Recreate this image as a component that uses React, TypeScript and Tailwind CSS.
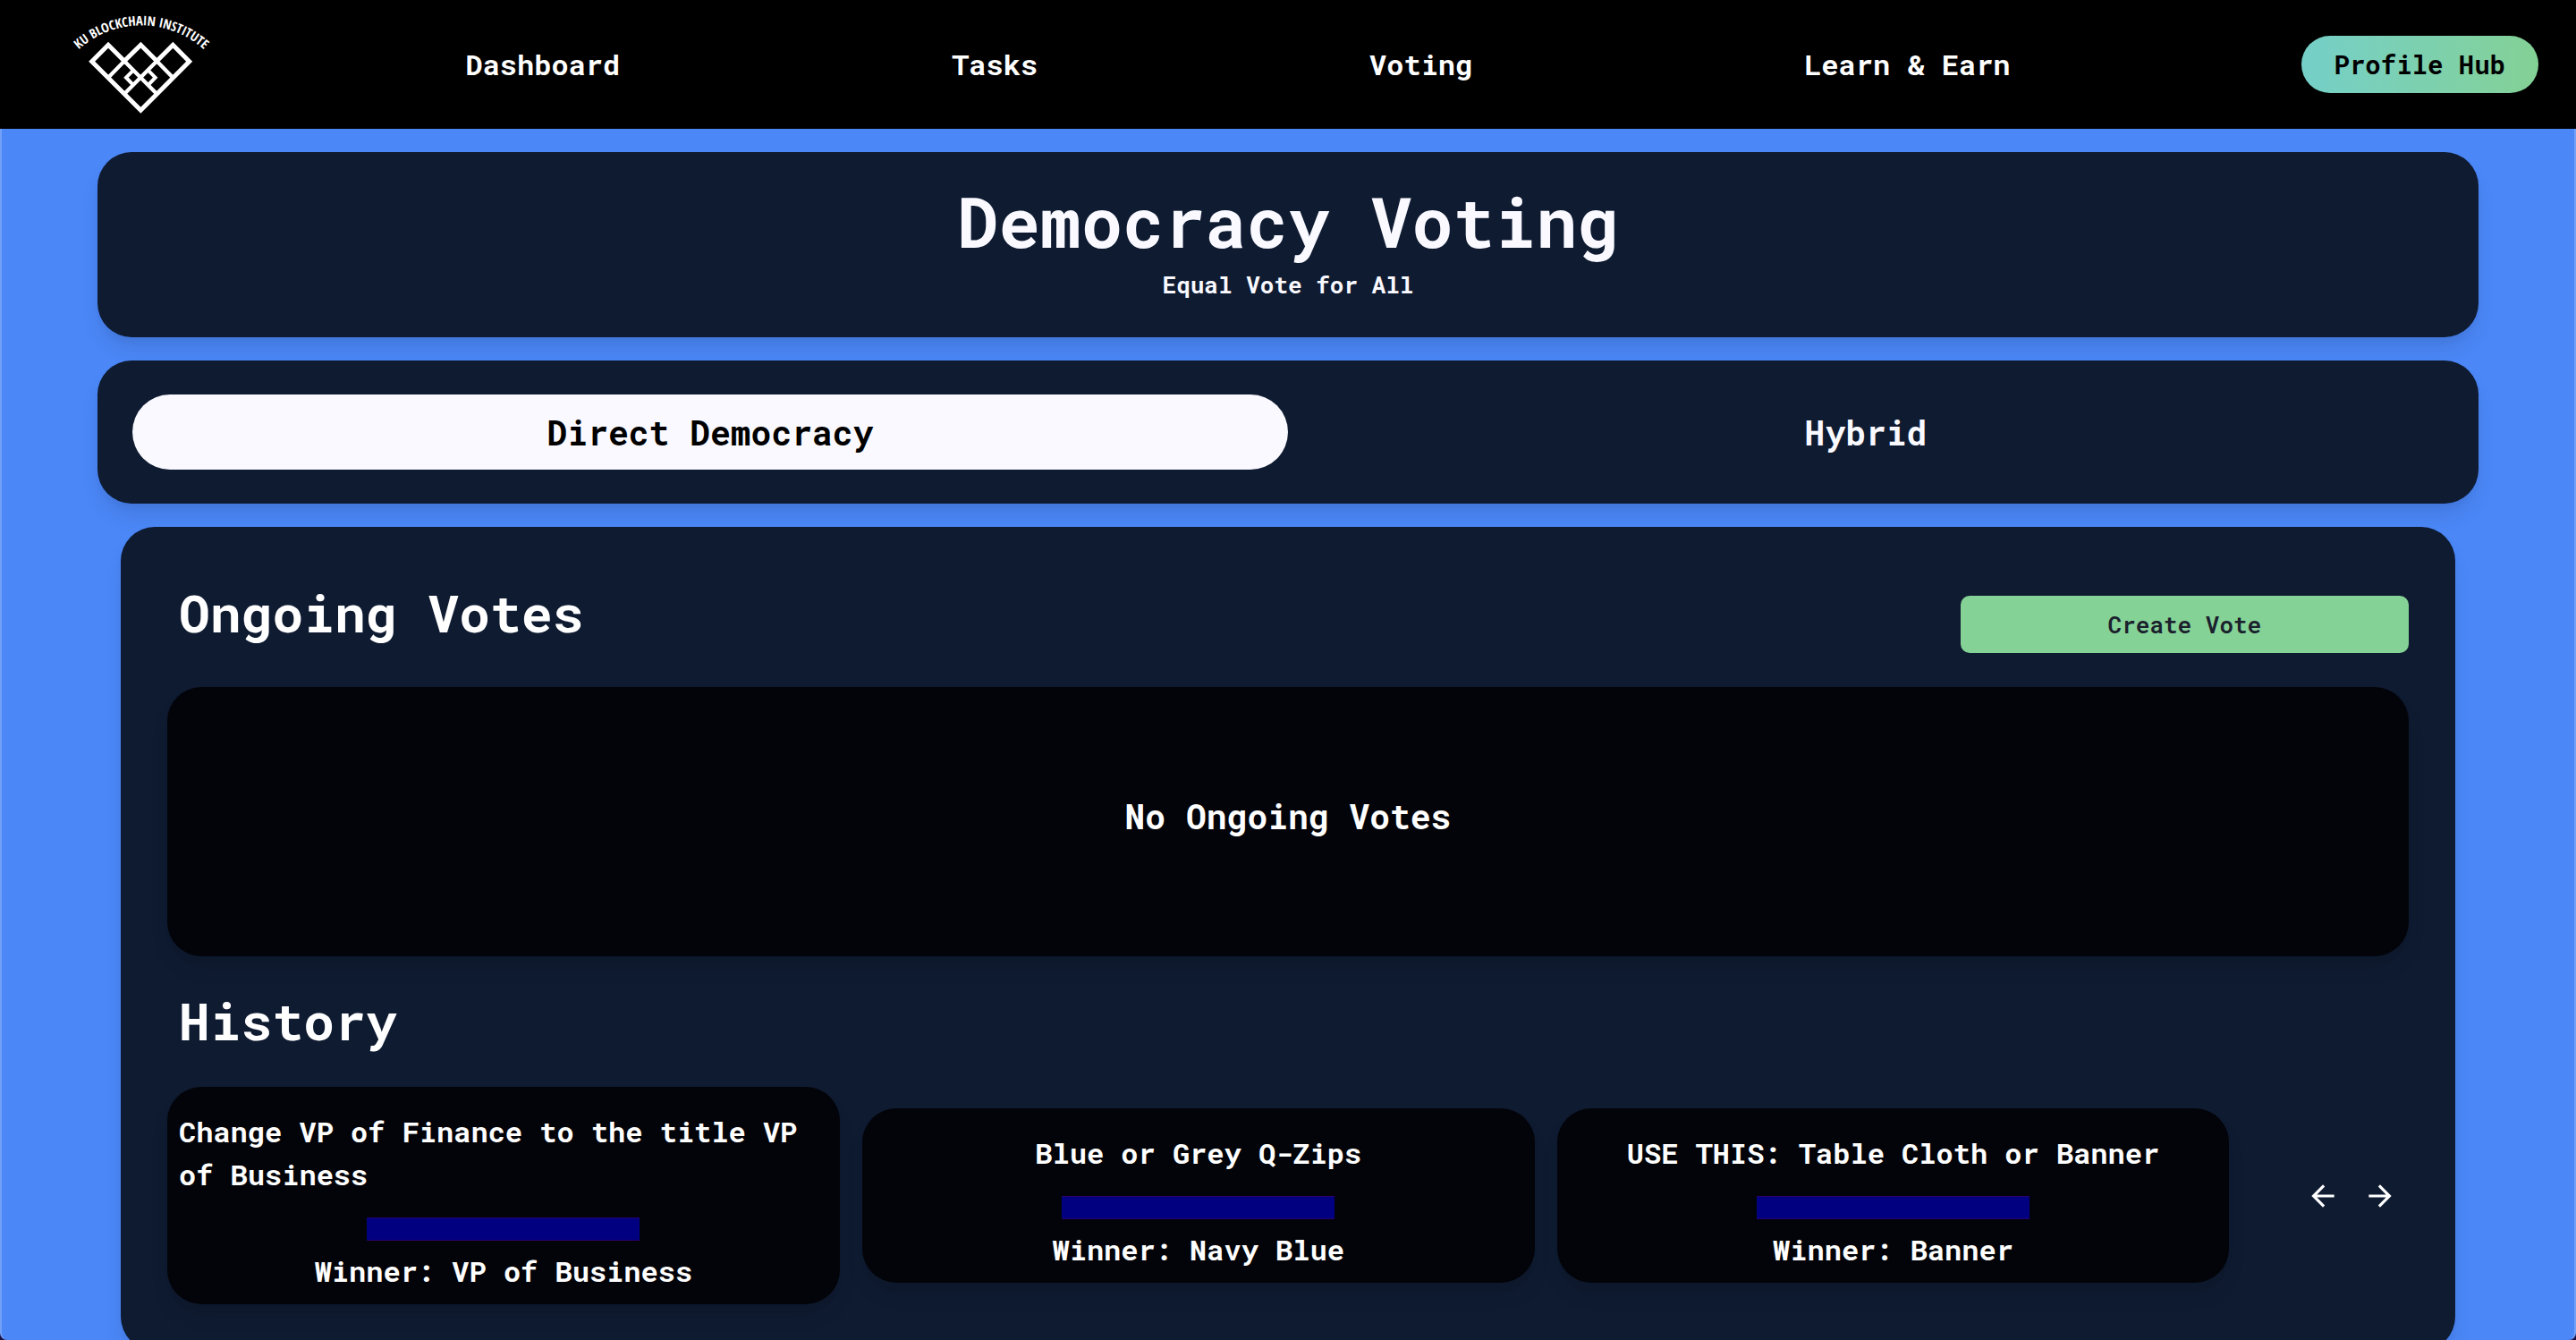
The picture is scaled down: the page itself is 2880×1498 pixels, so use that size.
import { MdArrowBack, MdArrowForward } from "react-icons/md";

const navLinks = ["Dashboard", "Tasks", "Voting", "Learn & Earn"];

const pastVotes = [
  { title: "Change VP of Finance to the title VP of Business", winner: "VP of Business" },
  { title: "Blue or Grey Q-Zips", winner: "Navy Blue" },
  { title: "USE THIS: Table Cloth or Banner", winner: "Banner" },
];

function Logo() {
  return (
    <svg viewBox="0 0 600 432" className="ml-[60px] h-36 w-[200px]" role="img" aria-label="KU Blockchain Institute">
      <path id="logo-arc" d="M78 172 A312 312 0 0 1 510 172" fill="none" />
      <text fill="#fff" fontSize="44" fontWeight="700" fontFamily="'Open Sans Condensed', 'Liberation Sans Narrow', 'Liberation Sans', sans-serif">
        <textPath href="#logo-arc" startOffset="50%" textAnchor="middle">
          KU BLOCKCHAIN INSTITUTE
        </textPath>
      </text>
      <g fill="none" stroke="#fff" strokeWidth="15">
        <path d="M128 206 L183 151 L237 205 L292 151 L346 205 L400 151 L455 206 L292 370 Z" />
        <path d="M183 260 L237 205 L346 315" strokeWidth="13" />
        <path d="M400 260 L346 205 L237 315" strokeWidth="13" />
        <path d="M267 236 L243 260 L268 286" strokeWidth="12" />
        <path d="M317 236 L341 260 L316 286" strokeWidth="12" />
      </g>
    </svg>
  );
}

function VoteCard({ title, winner }: { title: string; winner: string }) {
  return (
    <article className="flex w-[30%] flex-col items-center rounded-[38px] bg-[#030409] px-[13px] pt-[26px] pb-[13px] text-[32px] leading-[48px] shadow-[0_16px_24px_-5px_rgba(0,0,0,0.1),0_6px_10px_-3px_rgba(0,0,0,0.05)]">
      <h3>{title}</h3>
      <div className="mt-6 mb-[10px] h-[26px] w-[42%] border-y border-[#2a0070] bg-[#000080]" />
      <p>Winner: {winner}</p>
    </article>
  );
}

export default function App() {
  return (
    <div className="flex h-screen flex-col overflow-hidden bg-[#1a1040] font-['Roboto_Mono','DejaVu_Sans_Mono',monospace] font-bold text-white">
      <header className="flex h-36 shrink-0 items-center bg-black">
        <div className="w-[335px] shrink-0">
          <Logo />
        </div>
        <nav className="flex flex-1 justify-around text-[32px] leading-[48px]">
          {navLinks.map((label) => (
            <a key={label} href="#">
              {label}
            </a>
          ))}
        </nav>
        <div className="flex w-[447px] shrink-0 justify-end pr-[42px]">
          <button className="h-16 rounded-full bg-linear-to-r from-[#75cfc8] to-[#84d195] px-[37px] pt-[2px] text-[29px] text-black">
            Profile Hub
          </button>
        </div>
      </header>

      <main className="flex min-h-0 flex-1 flex-col gap-[26px] rounded-b-[8px] border-x-2 border-[#72a0f8] bg-[#4b87f7] px-[107px] pt-[26px] *:shrink-0">
        <section className="rounded-[38px] bg-[#0f1b31] pt-[38px] pb-[39px] text-center text-[#f9f9ff] shadow-[0_16px_24px_-5px_rgba(0,0,0,0.1),0_6px_10px_-3px_rgba(0,0,0,0.05)]">
          <h1 className="mb-[13px] text-[77px] leading-[78px]">Democracy Voting</h1>
          <p className="text-[26px] leading-[39px]">Equal Vote for All</p>
        </section>

        <section className="grid grid-cols-2 rounded-[38px] bg-[#0f1b31] px-[39px] py-[38px] text-[38px] leading-[58px] shadow-[0_16px_24px_-5px_rgba(0,0,0,0.1),0_6px_10px_-3px_rgba(0,0,0,0.05)]">
          <button className="rounded-full bg-[#f9f9ff] py-[13px] text-black">Direct Democracy</button>
          <button className="rounded-full py-[13px] text-[#f9f9ff]">Hybrid</button>
        </section>

        <section className="mx-[26px] rounded-[38px] bg-[#0f1b31] px-[52px] pt-[61px] pb-[52px] shadow-[0_16px_24px_-5px_rgba(0,0,0,0.1),0_6px_10px_-3px_rgba(0,0,0,0.05)]">
          <div className="mb-[38px] flex justify-between">
            <h2 className="pl-[13px] text-[58px] leading-[69px]">Ongoing Votes</h2>
            <button className="mt-4 h-16 w-1/5 rounded-[10px] bg-[#85d297] text-[26px] font-semibold text-[#1a202c]">
              Create Vote
            </button>
          </div>
          <div className="flex h-[301px] items-center justify-center rounded-[38px] bg-[#030409] pb-3 text-[38px] shadow-[0_16px_24px_-5px_rgba(0,0,0,0.1),0_6px_10px_-3px_rgba(0,0,0,0.05)]">
            No Ongoing Votes
          </div>

          <h2 className="mt-[37px] mb-10 pl-[13px] text-[58px] leading-[69px]">History</h2>
          <div className="flex items-center gap-[25px]">
            {pastVotes.map((vote) => (
              <VoteCard key={vote.title} title={vote.title} winner={vote.winner} />
            ))}
            <div className="ml-auto flex">
              <button aria-label="Previous votes" className="flex size-16 items-center justify-center">
                <MdArrowBack size={38} />
              </button>
              <button aria-label="Next votes" className="flex size-16 items-center justify-center">
                <MdArrowForward size={38} />
              </button>
            </div>
          </div>
        </section>
      </main>
    </div>
  );
}
